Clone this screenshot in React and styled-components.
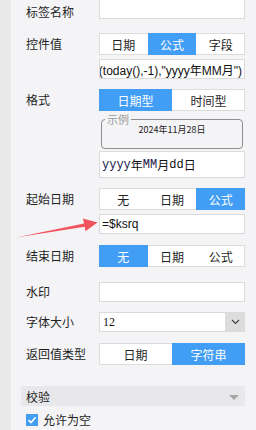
import * as React from "react";
import styled, { createGlobalStyle } from "styled-components";

const BLUE = "#429df5";
const CJK = `"Noto Sans CJK SC", "Noto Sans", sans-serif`;
const LATIN = `"Liberation Sans", "Noto Sans CJK SC", sans-serif`;

const Global = createGlobalStyle`
  html, body {
    margin: 0;
    padding: 0;
    background: #f4f4f6;
  }
  * {
    box-sizing: border-box;
  }
`;

const Screen = styled.div`
  position: relative;
  width: 256px;
  height: 430px;
  overflow: hidden;
  display: flex;
  font-family: ${CJK};
  font-size: 12px;
  color: #1f1f1f;
`;

const Strip = styled.div`
  width: 11px;
  background: #e9e9e9;
`;

const Panel = styled.div`
  flex: 1;
  background: #f4f4f6;
  padding: 0 11px 0 15px;
  display: flex;
  flex-direction: column;
`;

const Row = styled.div`
  display: grid;
  grid-template-columns: 73px 1fr;
  margin-top: ${(p) => p.$mt}px;
`;

const Label = styled.div`
  line-height: ${(p) => p.$lh || 22}px;
  padding-top: ${(p) => p.$pt || 0}px;
  white-space: nowrap;
`;

const Controls = styled.div`
  display: flex;
  flex-direction: column;
  gap: ${(p) => p.$gap || 4}px;
  min-width: 0;
`;

const Input = styled.div`
  height: ${(p) => p.$h || 20}px;
  background: #fff;
  border: 1px solid #dadada;
  padding: 0 2px;
  display: flex;
  align-items: center;
  justify-content: ${(p) => (p.$end ? "flex-end" : "flex-start")};
  overflow: hidden;
  white-space: nowrap;
  font-family: ${(p) => p.$font || LATIN};
  font-size: 12px;
  color: #111;
`;

const Seg = styled.div`
  height: 22px;
  display: flex;
  background: #fff;
  border: 1px solid #dcdcdc;
`;

const SegItem = styled.div`
  flex: 1;
  display: flex;
  align-items: center;
  justify-content: center;
  margin: -1px 0;
  background: ${(p) => (p.$active ? BLUE : "transparent")};
  color: ${(p) => (p.$active ? "#fff" : "#1f1f1f")};
  &:first-child {
    margin-left: -1px;
  }
  &:last-child {
    margin-right: -1px;
  }
`;

const Sample = styled.fieldset`
  margin: 0 2px;
  padding: 0;
  height: 36px;
  border: 1px solid #8e8e8e;
  border-radius: 4px;
  display: flex;
  align-items: center;
  justify-content: center;
`;

const Legend = styled.legend`
  margin-left: 3px;
  padding: 0 2px;
  font-size: 11px;
  line-height: 12px;
  color: #9a9a9a;
`;

const SampleText = styled.div`
  font-size: 9px;
  line-height: 12px;
  color: #222;
  margin-top: -1px;
`;

const Mono = styled.span`
  font-family: "Liberation Mono", monospace;
  color: ${(p) => p.$c || "#111"};
`;

const Select = styled.div`
  height: 20px;
  display: flex;
  background: #fff;
  border: 1px solid #dadada;
`;

const SelectValue = styled.div`
  flex: 1;
  padding-left: 3px;
  display: flex;
  align-items: center;
  font-family: "Liberation Serif", serif;
  font-size: 12px;
  color: #111;
`;

const SelectButton = styled.div`
  width: 20px;
  margin: -1px -1px -1px 0;
  background: #dcdcdc;
  display: flex;
  align-items: center;
  justify-content: center;
`;

const Section = styled.div`
  margin: 21px 0 0 -5px;
  height: 20px;
  background: #e8e8ea;
  padding: 0 6px 0 5px;
  display: flex;
  align-items: center;
  justify-content: space-between;
`;

const Caret = styled.div`
  width: 0;
  height: 0;
  border-left: 5px solid transparent;
  border-right: 5px solid transparent;
  border-top: 5px solid #a6a6a6;
  margin-top: 2px;
`;

const CheckRow = styled.label`
  margin-top: 8px;
  display: flex;
  align-items: center;
  gap: 5px;
  line-height: 12px;
`;

const Box = styled.span`
  width: 12px;
  height: 12px;
  background: ${BLUE};
  display: flex;
  align-items: center;
  justify-content: center;
`;

const Overlay = styled.svg`
  position: absolute;
  left: 0;
  top: 0;
  pointer-events: none;
`;

const Segmented = ({ items, active }) => (
  <Seg>
    {items.map((t, i) => (
      <SegItem key={t} $active={i === active}>
        {t}
      </SegItem>
    ))}
  </Seg>
);

const App = () => {
  return (
    <Screen>
      <Global />
      <Strip />
      <Panel>
        <Row $mt={-1}>
          <Label $lh={20} $pt={3}>标签名称</Label>
          <Controls>
            <Input />
          </Controls>
        </Row>

        <Row $mt={11}>
          <Label>控件值</Label>
          <Controls>
            <Segmented items={["日期", "公式", "字段"]} active={1} />
            <Input $end>
              =FORMAT(DATEDELTA(today(),-1),"yyyy年MM月")
            </Input>
          </Controls>
        </Row>

        <Row $mt={10}>
          <Label>格式</Label>
          <Controls $gap={2}>
            <Segmented items={["日期型", "时间型"]} active={0} />
            <Sample>
              <Legend>示例</Legend>
              <SampleText>2024年11月28日</SampleText>
            </Sample>
            <Input $h={27} $font={CJK}>
              <Mono $c="#1a1a4a">yyyy</Mono>年<Mono $c="#1a1a4a">MM</Mono>月
              <Mono>dd</Mono>日
            </Input>
          </Controls>
        </Row>

        <Row $mt={10}>
          <Label>起始日期</Label>
          <Controls>
            <Segmented items={["无", "日期", "公式"]} active={2} />
            <Input>=$ksrq</Input>
          </Controls>
        </Row>

        <Row $mt={11}>
          <Label>结束日期</Label>
          <Controls>
            <Segmented items={["无", "日期", "公式"]} active={0} />
          </Controls>
        </Row>

        <Row $mt={15}>
          <Label $lh={20}>水印</Label>
          <Controls>
            <Input />
          </Controls>
        </Row>

        <Row $mt={10}>
          <Label $lh={20}>字体大小</Label>
          <Controls>
            <Select>
              <SelectValue>12</SelectValue>
              <SelectButton>
                <svg width="9" height="6" viewBox="0 0 9 6">
                  <path d="M1 1 L4.5 4.5 L8 1" fill="none" stroke="#444" strokeWidth="1.2" />
                </svg>
              </SelectButton>
            </Select>
          </Controls>
        </Row>

        <Row $mt={11}>
          <Label>返回值类型</Label>
          <Controls>
            <Segmented items={["日期", "字符串"]} active={1} />
          </Controls>
        </Row>

        <Section>
          <span>校验</span>
          <Caret />
        </Section>

        <CheckRow>
          <Box>
            <svg width="10" height="10" viewBox="0 0 10 10">
              <path d="M1.5 5.2 L4 7.6 L8.6 2.2" fill="none" stroke="#fff" strokeWidth="1.6" />
            </svg>
          </Box>
          允许为空
        </CheckRow>
      </Panel>

      <Overlay width="256" height="430" viewBox="0 0 256 430">
        <polygon
          points="16,237.5 84,223.6 83,218.6 97.5,222.6 85.5,231.2 84.6,226.8"
          fill="#f2545f"
        />
      </Overlay>
    </Screen>
  );
};

export default App;
